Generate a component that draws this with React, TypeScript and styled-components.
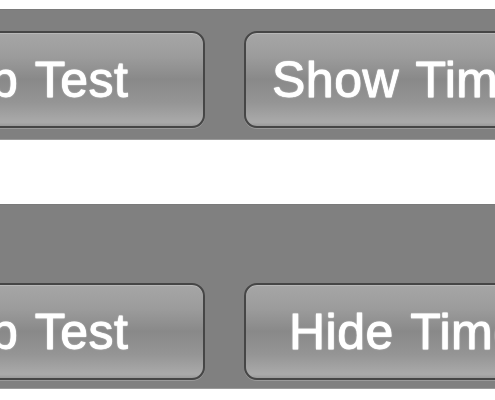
import styled, { createGlobalStyle } from "styled-components"

const GlobalStyle = createGlobalStyle`
    html, body {
        margin: 0;
        padding: 0;
        background: #ffffff;
        overflow: hidden;
    }
    body {
        font-family: "Liberation Sans", Arial, sans-serif;
    }
`;

const Page = styled.div`
    width: 495px;
    height: 400px;
    display: flex;
    flex-direction: column;
    padding-top: 9px;
    gap: 64px;
    box-sizing: border-box;
    overflow: hidden;
`;

/* gray bar holding the controls */
const Toolbar = styled.div<{ $top: number; $bottom: number }>`
    display: flex;
    align-items: flex-start;
    gap: 39px;
    padding-top: ${p => p.$top}px;
    padding-bottom: ${p => p.$bottom}px;
    background: #808080;
    border-bottom: 1px solid #9a9a9a;
    box-shadow: inset 0 1px 0 #7a7a7a;
`;

const Button = styled.button<{ $width: number; $lead?: number }>`
    flex: 0 0 auto;
    box-sizing: border-box;
    width: ${p => p.$width}px;
    height: 97px;
    padding: 0 0 0 ${p => p.$lead ?? 0}px;
    display: flex;
    align-items: center;
    justify-content: ${p => (p.$lead === undefined ? "center" : "flex-start")};
    border: 2px solid #464646;
    border-radius: 13px;
    background: linear-gradient(
        to bottom,
        #a6a6a6 0%,
        #9c9c9c 25%,
        #898989 50%,
        #959595 75%,
        #aaaaaa 96%,
        #9a9a9a 100%
    );
    box-shadow: inset 0 1px 0 #b8b8b8, 0 1px 0 #9a9a9a;
    color: #ffffff;
    font-family: "Liberation Sans", Arial, sans-serif;
    font-size: 50px;
    line-height: 1;
    letter-spacing: 0.5px;
    word-spacing: 3px;
    white-space: nowrap;
    -webkit-text-stroke: 0.8px #ffffff;
    text-shadow: 0 0 2px rgba(255, 255, 255, 0.8), 0 0 1px #ffffff;
    cursor: pointer;
`;

const LeadButton = styled(Button)`
    margin-left: -163px;
`;

export default function App() {
    return (
        <>
            <GlobalStyle />
            <Page>
                <Toolbar $top={22} $bottom={11}>
                    <LeadButton $width={368}>Stop Test</LeadButton>
                    <Button $width={360} $lead={26}>Show Timer</Button>
                </Toolbar>
                <Toolbar $top={79} $bottom={8}>
                    <LeadButton $width={368}>Stop Test</LeadButton>
                    <Button $width={360} $lead={43}>Hide Timer</Button>
                </Toolbar>
            </Page>
        </>
    );
}
